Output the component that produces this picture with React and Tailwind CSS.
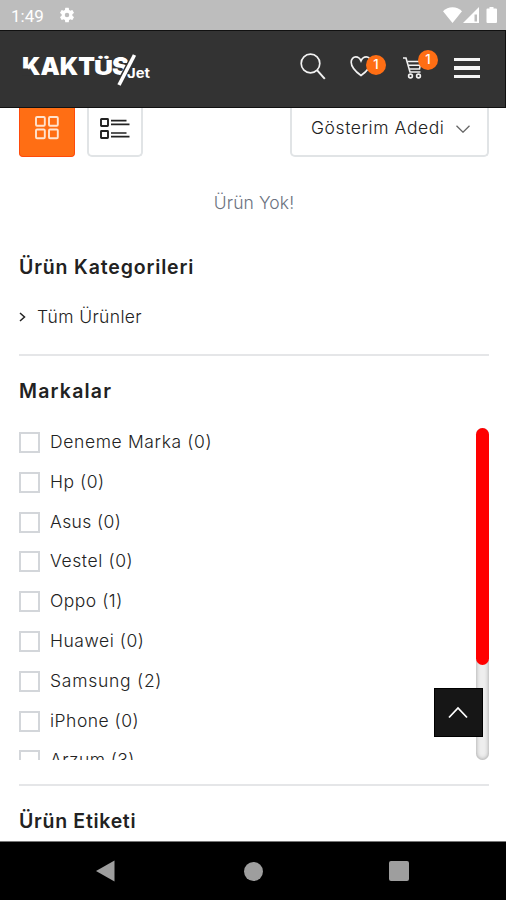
import React, { useState } from 'react';

const brands = [
  { name: 'Deneme Marka (0)', spacing: 'tracking-[0.63px]' },
  { name: 'Hp (0)', spacing: 'tracking-[0.55px]' },
  { name: 'Asus (0)', spacing: 'tracking-[0.4px]' },
  { name: 'Vestel (0)', spacing: 'tracking-[0.6px]' },
  { name: 'Oppo (1)', spacing: 'tracking-[0.5px]' },
  { name: 'Huawei (0)', spacing: 'tracking-[0.55px]' },
  { name: 'Samsung (2)', spacing: 'tracking-[0.75px]' },
  { name: 'iPhone (0)', spacing: 'tracking-[0.5px]' },
  { name: 'Arzum (3)', spacing: 'tracking-[0.45px]' },
];

const StatusBar = () => (
  <div className="h-[30px] shrink-0 bg-[#bdbdbd] flex items-center justify-between pl-[11px] pr-[7px] text-white">
    <div className="flex items-center gap-[14px]">
      <span className="font-[Roboto] font-normal text-[17px] leading-[30px] pt-px">1:49</span>
      <svg width="18" height="18" viewBox="0 0 24 24" fill="currentColor">
        <path d="M19.14 12.94c.04-.3.06-.61.06-.94s-.02-.64-.07-.94l2.03-1.58a.49.49 0 0 0 .12-.61l-1.92-3.32a.49.49 0 0 0-.59-.22l-2.39.96a7 7 0 0 0-1.62-.94l-.36-2.54a.48.48 0 0 0-.48-.41h-3.84a.48.48 0 0 0-.47.41l-.36 2.54a7.2 7.2 0 0 0-1.62.94l-2.39-.96a.49.49 0 0 0-.59.22L2.73 8.87a.48.48 0 0 0 .12.61l2.03 1.58a6 6 0 0 0 0 1.88l-2.03 1.58a.49.49 0 0 0-.12.61l1.92 3.32c.12.22.37.29.59.22l2.39-.96c.5.38 1.03.7 1.62.94l.36 2.54c.05.24.24.41.48.41h3.84c.24 0 .44-.17.47-.41l.36-2.54a7 7 0 0 0 1.62-.94l2.39.96c.22.08.47 0 .59-.22l1.92-3.32a.48.48 0 0 0-.12-.61zM12 15a3 3 0 1 1 0-6 3 3 0 0 1 0 6z" />
      </svg>
    </div>
    <svg width="56" height="18" viewBox="0 0 56 18" fill="currentColor">
      <path d="M0 5.2C5-.1 14-.1 19 5.2L9.5 17z" />
      <path d="M36 1V17H20z" />
      <path d="M31.5 8.5h2.5v7h-2.5z" fill="#bdbdbd" />
      <path d="M46.5 1h4v1.5H53a1 1 0 0 1 1 1V16a1 1 0 0 1-1 1h-8.5a1 1 0 0 1-1-1V3.500a1 1 0 0 1 1-1h2z" />
    </svg>
  </div>
);

const Logo = () => (
  <svg width="130" height="38" viewBox="0 0 130 38" className="font-[Inter] overflow-visible">
    <text y="25" fontSize="25" fontWeight="900" fill="#fff">
      <tspan x="-1" textLength="73" lengthAdjust="spacingAndGlyphs">KAKT</tspan>
      <tspan x="71" fontSize="20" textLength="19" lengthAdjust="spacingAndGlyphs">Ü</tspan>
      <tspan x="89" textLength="17" lengthAdjust="spacingAndGlyphs">S</tspan>
    </text>
    {/* notch in the K stem */}
    <path d="M-1 18.500h6l5 7H-1z" fill="#333" />
    <path d="M111.500 5L95.500 35" stroke="#333" strokeWidth="6" />
    <path d="M111.500 5L96 35" stroke="#fff" strokeWidth="3.600" />
    <text x="104" y="28" fontSize="13.500" fontWeight="700" fill="#fff" textLength="23" lengthAdjust="spacingAndGlyphs">
      Jet
    </text>
  </svg>
);

const Badge = ({ className }) => (
  <span
    className={`absolute w-5 h-5 rounded-full bg-[#ff6e14] text-white text-[13px] font-medium flex items-center justify-center ${className}`}
  >
    1
  </span>
);

const Header = () => (
  <header className="h-[78px] shrink-0 bg-[#333] border-y border-r border-[#111] flex items-center justify-between pl-[23px] pr-[25px]">
    <Logo />
    <div className="flex items-center text-[#f2f2f2]">
      <svg width="26" height="27" viewBox="0 0 26 27" fill="none" stroke="currentColor" strokeWidth="1.700" className="mr-[24px] -mt-1.5">
        <circle cx="10.500" cy="10.500" r="9.300" />
        <path d="M17 17.200l7.800 8.600" strokeWidth="2" />
      </svg>
      <div className="relative w-[36px] h-6 mr-[17px] -mt-1">
        <svg width="22" height="22" viewBox="0 0 24 22" preserveAspectRatio="none" fill="none" stroke="currentColor" strokeWidth="1.800">
          <path d="M12 20.500C9 18.500 1.300 13 1.300 7.200 1.300 4 3.600 1.800 6.300 1.800c2.400 0 4.500 1.400 5.700 4 1.200-2.600 3.300-4 5.700-4 2.700 0 5 2.200 5 5.400 0 5.800-7.700 11.300-10.700 13.300z" />
        </svg>
        <Badge className="top-0 left-[16px]" />
      </div>
      <div className="relative w-[36px] h-6 mr-[15px] -mt-0.5">
        <svg width="22" height="24" viewBox="0 0 22 24" fill="none" stroke="currentColor" strokeWidth="1.600">
          <path d="M0 2h3l4 14h10.500" />
          <path d="M4.300 5.500H18l-1.500 7.500H6.300M5.300 9.300h12" />
          <circle cx="7.500" cy="20" r="1.900" />
          <circle cx="15.500" cy="20" r="1.900" />
        </svg>
        <Badge className="-top-[6px] left-[15px]" />
      </div>
      <div className="flex flex-col gap-[5px] w-[26px] -mt-0.5">
        <span className="h-[3.5px] bg-[#f5f5f5]"></span>
        <span className="h-[3.5px] bg-[#f5f5f5]"></span>
        <span className="h-[3.5px] bg-[#f5f5f5]"></span>
      </div>
    </div>
  </header>
);

const Toolbar = () => (
  <div className="h-[49px] flex justify-between">
    <div className="flex gap-3">
      <button className="w-14 bg-[#ff6e14] border border-t-0 border-[#ff4a0a] rounded-b-[4px] flex justify-center pt-[8px]">
        <svg width="24" height="24" viewBox="0 0 24 24" fill="none" stroke="#ffe3cf" strokeWidth="1.900">
          <rect x="1" y="1" width="8.800" height="8.800" rx="1" />
          <rect x="14" y="1" width="8.800" height="8.800" rx="1" />
          <rect x="1" y="13.500" width="8.800" height="8.800" rx="1" />
          <rect x="14" y="13.500" width="8.800" height="8.800" rx="1" />
        </svg>
      </button>
      <button className="w-[56px] border-2 border-t-0 border-[#e1e4e6] rounded-b-[5px] flex justify-center pt-[10px]">
        <svg width="30" height="22" viewBox="0 0 30 22" fill="none" stroke="#222" strokeWidth="1.900">
          <rect x="1" y="1" width="7" height="7" rx="0.500" />
          <rect x="1" y="13" width="7" height="7" rx="0.500" />
          <path d="M11 2.700h15.500M11 6.300h18.500M11 15h15.500M11 18.700h18.500" strokeWidth="1.700" />
        </svg>
      </button>
    </div>
    <div className="w-[199px] border-2 border-t-0 border-[#e1e4e6] rounded-b-[5px] flex items-start justify-between pl-[19px] pr-[17px] pt-[8px]">
      <span className="text-[17.500px] leading-6 tracking-[0.58px] text-[#222] whitespace-nowrap">Gösterim Adedi</span>
      <svg width="14" height="8" viewBox="0 0 14 8" fill="none" stroke="#666" strokeWidth="1.300" className="mt-[9px]">
        <path d="M.5.7L7 7.200 13.500.7" />
      </svg>
    </div>
  </div>
);

const Brands = () => {
  const [checked, setChecked] = useState([]);

  const toggle = (name) => {
    setChecked(checked.includes(name) ? checked.filter((n) => n !== name) : [...checked, name]);
  };

  return (
    <div className="mt-[25px] h-[332px] flex justify-between">
      <div className="flex flex-col overflow-hidden">
        {brands.map((brand) => (
          <label key={brand.name} className="h-[39.800px] shrink-0 flex items-start gap-[10px] pt-[4px]">
            <input
              type="checkbox"
              checked={checked.includes(brand.name)}
              onChange={() => toggle(brand.name)}
              className="appearance-none w-[21px] h-[21px] border-2 border-[#d3d6da] checked:bg-[#ff6e14]"
            />
            <span className={`text-[17.500px] leading-[19px] text-[#222] whitespace-nowrap ${brand.spacing}`}>{brand.name}</span>
          </label>
        ))}
      </div>
      <div className="w-[13px] rounded-full bg-[#eee] shadow-[inset_0_0_4px_#999]">
        <div className="h-[237px] rounded-full bg-[#ff0000]"></div>
      </div>
    </div>
  );
};

const NavBar = () => (
  <nav className="h-[59px] shrink-0 bg-black border-t border-[#777] flex items-center justify-between pl-[96px] pr-[97px]">
    <svg width="19" height="22" viewBox="0 0 19 22" fill="#9e9e9e">
      <path d="M0 11L18.500.5v21z" />
    </svg>
    <span className="w-[19px] h-[19px] ml-0.5 rounded-full bg-[#9e9e9e]"></span>
    <span className="w-[20px] h-[20px] rounded-[2px] bg-[#9e9e9e]"></span>
  </nav>
);

export default function App() {
  return (
    <div className="relative w-[506px] h-[900px] flex flex-col bg-white overflow-hidden font-[Inter,sans-serif] font-light">
      <StatusBar />
      <Header />
      <main className="h-[733px] shrink-0 pl-[19px] pr-[17px] overflow-hidden">
        <Toolbar />
        <p className="mt-[34px] text-center text-[17.500px] leading-6 tracking-[0.1px] text-[#6b7280]">Ürün Yok!</p>
        <h2 className="mt-[40px] text-[19.500px] leading-6 font-semibold tracking-[0.85px] text-[#222]">Ürün Kategorileri</h2>
        <div className="mt-[26px] pb-[25px] border-b-2 border-[#e5e6e8] flex items-center text-[#222]">
          <svg width="7" height="10" viewBox="0 0 7 10" fill="none" stroke="currentColor" strokeWidth="1.500">
            <path d="M1 1l4.500 4L1 9" />
          </svg>
          <span className="ml-[11px] text-[17.500px] leading-6 tracking-[0.36px]">Tüm Ürünler</span>
        </div>
        <h2 className="mt-[23px] text-[19.500px] leading-6 font-semibold tracking-[1.200px] text-[#222]">Markalar</h2>
        <Brands />
        <div className="mt-[24px] border-b-2 border-[#e5e6e8]"></div>
        <h2 className="mt-[23px] text-[19.500px] leading-6 font-semibold tracking-[0.7px] text-[#222]">Ürün Etiketi</h2>
      </main>
      <NavBar />
      <button className="absolute left-[434px] top-[688px] w-[49px] h-[49px] bg-[#161616] border border-black flex items-center justify-center">
        <svg width="20" height="13" viewBox="0 0 20 13" fill="none" stroke="#fff" strokeWidth="1.800" className="-ml-px">
          <path d="M1 11.500L10 2l9 9.500" />
        </svg>
      </button>
    </div>
  );
}
